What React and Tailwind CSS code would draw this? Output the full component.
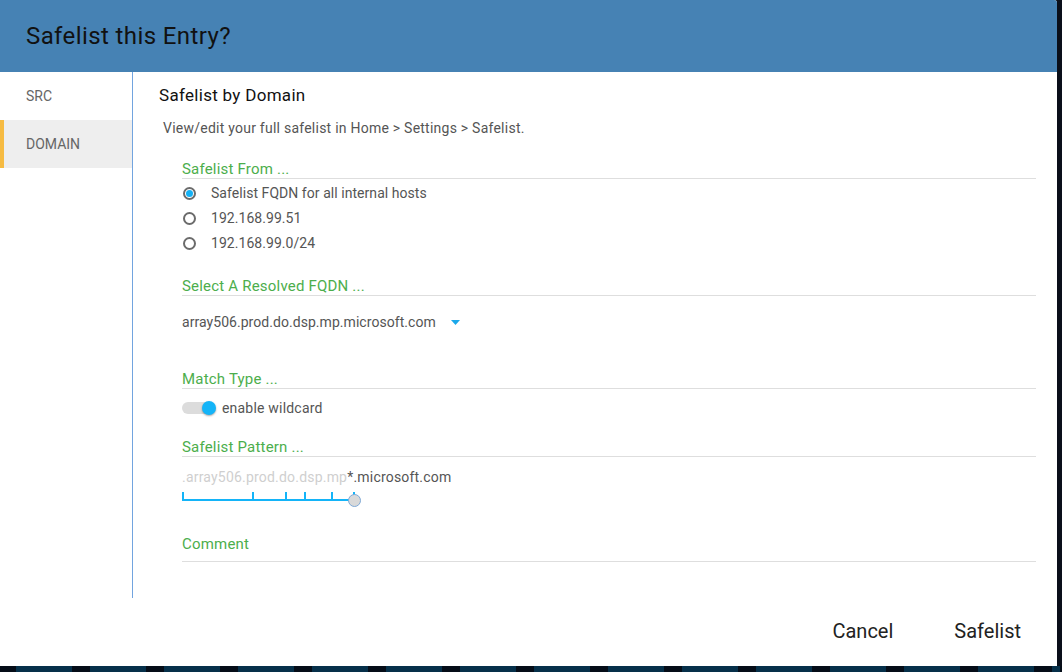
import { useState } from 'react';

const font = { fontFamily: 'Roboto, "Liberation Sans", sans-serif' };

const SectionTitle = ({ children }) => (
  <div className="border-b border-[#dedede] text-[15px] leading-[18px] tracking-[0.2px] text-[#4cae4c]">{children}</div>
);

const Radio = ({ checked, label }) => (
  <div className="flex h-[25px] items-center">
    <span className="flex h-[13px] w-[13px] items-center justify-center rounded-full border-2 border-[#6b6b6b]">
      {checked && <span className="h-[7px] w-[7px] rounded-full bg-[#14b1f5]" />}
    </span>
    <span className="ml-[15px] text-[14px] tracking-[0.05px] text-[#555]">{label}</span>
  </div>
);

const ticks = [0, 70, 103, 122, 149, 171];

const App = () => {
  const [tab, setTab] = useState('DOMAIN');
  const [choice] = useState(0);

  return (
    <div className="flex h-[672px] w-[1062px] flex-col bg-[#0a0f1a]" style={font}>
      <div className="flex h-[666px] w-[1057px] flex-col overflow-hidden rounded-tr-[3px] bg-white">
        <div className="flex h-[72px] shrink-0 items-center bg-[#4682b4] px-[26px] text-[24px] tracking-[0.4px] text-[#111]">
          Safelist this Entry?
        </div>

        <div className="flex h-[526px]">
          <div className="w-[133px] shrink-0 border-r border-[#72a4df]">
            {['SRC', 'DOMAIN'].map((t) => (
              <div
                key={t}
                onClick={() => setTab(t)}
                className={
                  tab === t
                    ? 'flex h-[48px] items-center border-l-[4px] border-[#f6bb42] bg-[#eeeeee] pl-[22px] text-[14px] text-[#666]'
                    : 'flex h-[48px] items-center pl-[26px] text-[14px] text-[#666]'
                }
              >
                {t}
              </div>
            ))}
          </div>

          <div className="flex-1 pl-[26px] pr-[21px] pt-[13px]">
            <div className="text-[17px] leading-[20px] tracking-[0.3px] text-[#111]">Safelist by Domain</div>
            <div className="mt-[14px] pl-[4px] text-[14px] leading-[18px] tracking-[0.24px] text-[#555]">
              View/edit your full safelist in Home &gt; Settings &gt; Safelist.
            </div>

            <div className="ml-[23px]">
              <div className="mt-[23px]">
                <SectionTitle>Safelist From ...</SectionTitle>
                <div className="mt-[2px] pl-[1px]">
                  <Radio checked={choice === 0} label="Safelist FQDN for all internal hosts" />
                  <Radio checked={choice === 1} label="192.168.99.51" />
                  <Radio checked={choice === 2} label="192.168.99.0/24" />
                </div>
              </div>

              <div className="mt-[21px]">
                <SectionTitle>Select A Resolved FQDN ...</SectionTitle>
                <div className="mt-[17px] flex items-center text-[14px] leading-[18px] tracking-[0.05px] text-[#555]">
                  array506.prod.do.dsp.mp.microsoft.com
                  <svg className="ml-[15px]" width="9" height="5" viewBox="0 0 9 5">
                    <path d="M0 0H9L4.5 5Z" fill="#1ba8ea" />
                  </svg>
                </div>
              </div>

              <div className="mt-[39px]">
                <SectionTitle>Match Type ...</SectionTitle>
                <div className="mt-[12px] flex h-[14px] items-center">
                  <div className="relative h-[12px] w-[32px] rounded-full bg-[#dcdcdc]">
                    <span className="absolute right-[-2px] top-[-1px] h-[14px] w-[14px] rounded-full bg-[#14b4f8] shadow-[0_1px_2px_rgba(0,0,0,0.35)]" />
                  </div>
                  <span className="ml-[8px] text-[14px] tracking-[0.2px] text-[#555]">enable wildcard</span>
                </div>
              </div>

              <div className="mt-[23px]">
                <SectionTitle>Safelist Pattern ...</SectionTitle>
                <div className="mt-[11px] text-[14px] leading-[18px] tracking-[0.2px]">
                  <span className="text-[#cfcfcf]">.array506.prod.do.dsp.mp</span>
                  <span className="text-[#555]">*.microsoft.com</span>
                </div>
                <div className="relative mt-[5px] h-[14px] w-[180px]">
                  <div className="absolute left-0 top-[8px] h-[2px] w-[172px] bg-[#14b4f8]" />
                  {ticks.map((x) => (
                    <div key={x} className="absolute top-[1px] h-[9px] w-[2px] bg-[#14b4f8]" style={{ left: x }} />
                  ))}
                  <div className="absolute left-[166px] top-[3px] h-[13px] w-[13px] rounded-full border border-[#7fa9d6] bg-[#d9d9d9]" />
                </div>
              </div>

              <div className="mt-[30px]">
                <div className="text-[15px] leading-[18px] tracking-[0.2px] text-[#4cae4c]">Comment</div>
                <div className="mt-[8px] border-b border-[#dedede]" />
              </div>
            </div>
          </div>
        </div>

        <div className="flex flex-1 items-center justify-end gap-[61px] pb-[2px] pr-[36px] text-[20px] text-[#222]">
          <button type="button">Cancel</button>
          <button type="button">Safelist</button>
        </div>
      </div>
      <div className="h-[6px] w-full bg-[repeating-linear-gradient(90deg,#050d18_0px,#050d18_18px,#06304a_18px,#06304a_74px)] bg-[position:-2px_0]" />
    </div>
  );
};

export default App;
